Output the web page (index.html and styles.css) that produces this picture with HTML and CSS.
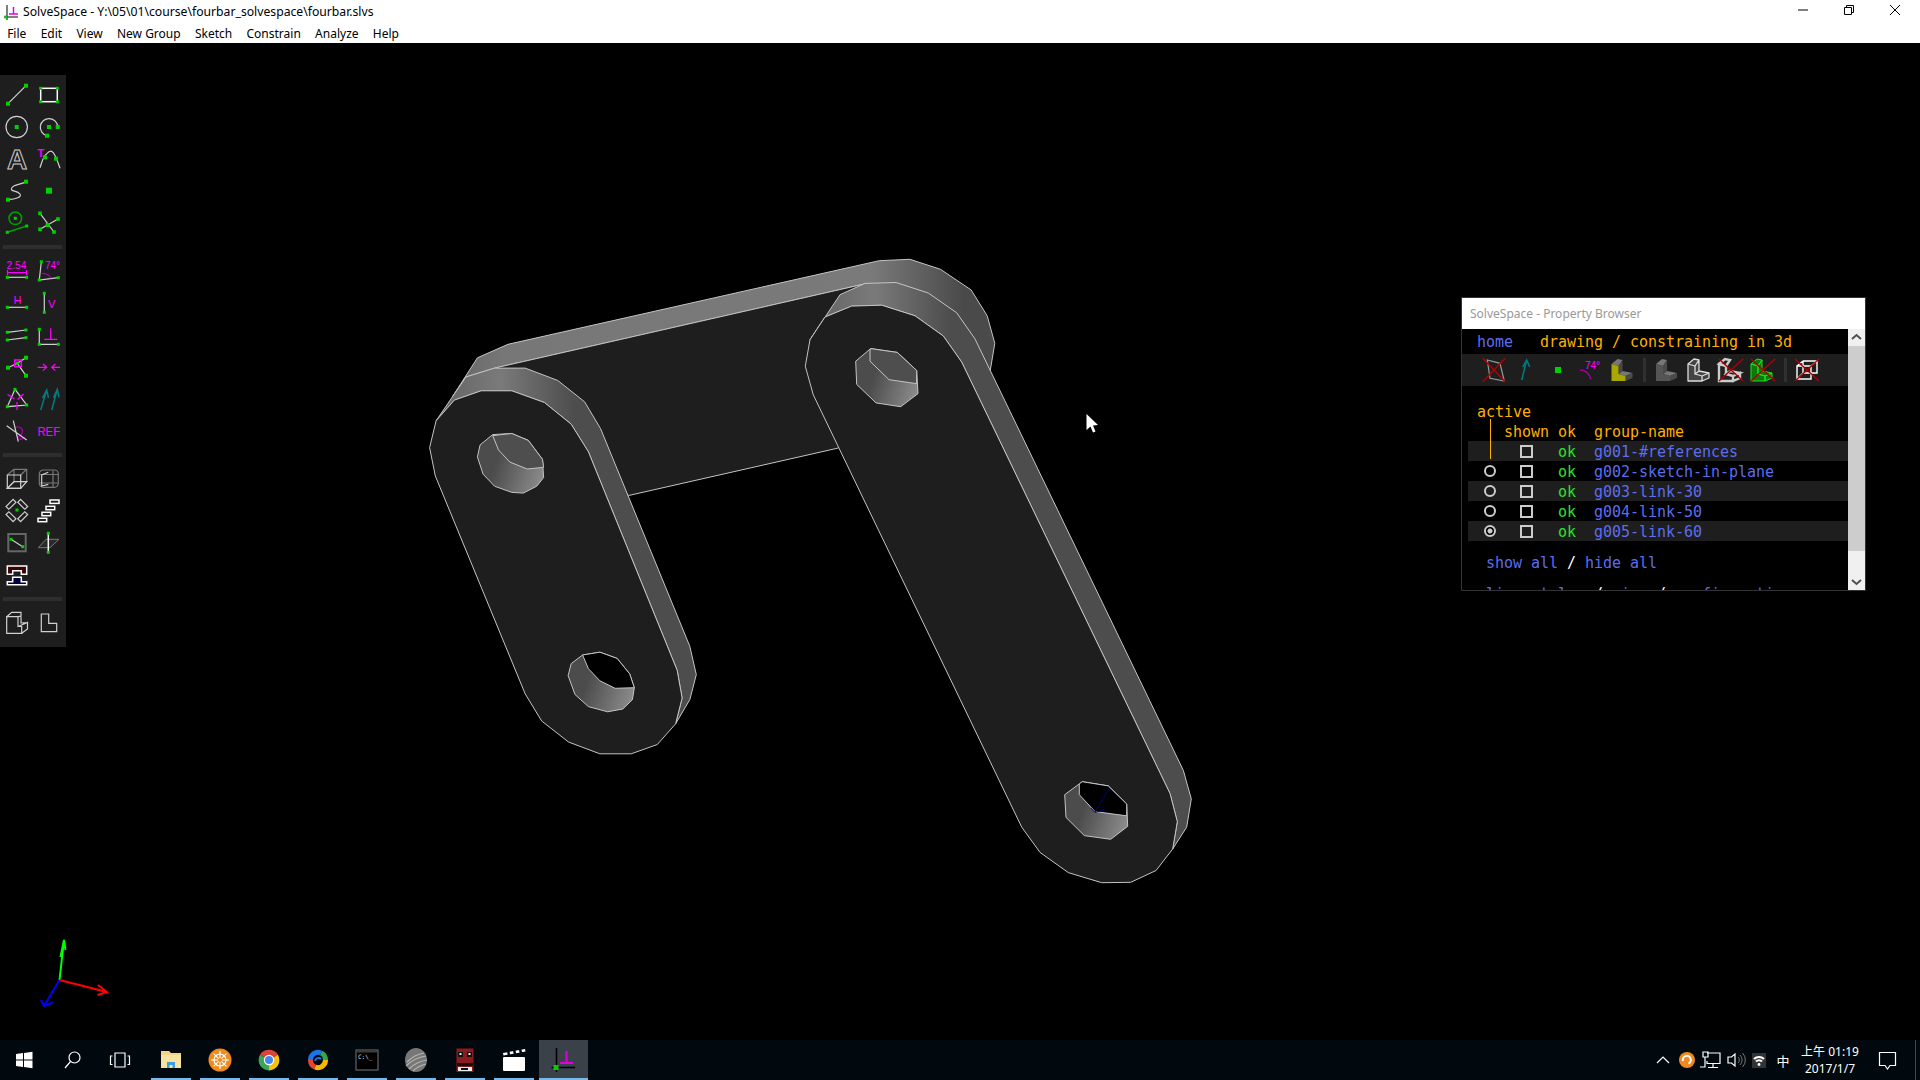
FILE: index.html
```html
<!DOCTYPE html>
<html lang="en">
<head>
    <meta charset="UTF-8">
    <title>SolveSpace</title>
    <link rel="stylesheet" href="styles.css">
</head>
<body>
    <div class="title-bar">
        <svg class="app-icon" viewBox="0 0 20 20">
            <path class="k" d="M3 15H17M6 3V18"/>
            <path class="m" d="M8 12H17M12.5 5V12"/>
            <rect class="g" x="3.5" y="13.5" width="3" height="3"/>
        </svg>
        <span class="title-text">SolveSpace - Y:\05\01\course\fourbar_solvespace\fourbar.slvs</span>
        <div class="win-btns">
            <svg class="win-btn" viewBox="0 0 46 20"><path class="k" d="M18 10H28"/></svg>
            <svg class="win-btn" viewBox="0 0 46 20"><path class="k" d="M18.5 7.5H25.5V14.5H18.5ZM20.5 7.5V5.5H27.5V12.5H25.5"/></svg>
            <svg class="win-btn" viewBox="0 0 46 20"><path class="k" d="M18 5L28 15M28 5L18 15"/></svg>
        </div>
    </div>
    <div class="menu-bar">
        <span class="menu-item">File</span>
        <span class="menu-item">Edit</span>
        <span class="menu-item">View</span>
        <span class="menu-item">New Group</span>
        <span class="menu-item">Sketch</span>
        <span class="menu-item">Constrain</span>
        <span class="menu-item">Analyze</span>
        <span class="menu-item">Help</span>
    </div>

    <div class="canvas">
        <svg class="model" viewBox="0 43 1920 997">
            <defs>
                <linearGradient id="rear" gradientUnits="userSpaceOnUse" x1="450" y1="0" x2="990" y2="0">
                    <stop offset="0" stop-color="#666"/>
                    <stop offset="0.1" stop-color="#777"/>
                    <stop offset="0.78" stop-color="#7a7a7a"/>
                    <stop offset="0.95" stop-color="#4a4a4a"/>
                </linearGradient>
                <linearGradient id="rim1" gradientUnits="userSpaceOnUse" x1="440" y1="0" x2="590" y2="0">
                    <stop offset="0" stop-color="#646464"/>
                    <stop offset="0.4" stop-color="#7a7a7a"/>
                    <stop offset="0.9" stop-color="#4d4d4d"/>
                </linearGradient>
                <linearGradient id="rim2" gradientUnits="userSpaceOnUse" x1="815" y1="0" x2="965" y2="0">
                    <stop offset="0" stop-color="#646464"/>
                    <stop offset="0.4" stop-color="#7a7a7a"/>
                    <stop offset="0.9" stop-color="#4d4d4d"/>
                </linearGradient>
                <linearGradient id="bore" x1="0" y1="0.35" x2="1" y2="0.65">
                    <stop offset="0.3" stop-color="#4c4c4c"/>
                    <stop offset="1" stop-color="#8a8a8a"/>
                </linearGradient>
            </defs>

            <!-- link-30, lies behind the other two -->
            <polygon class="edge" fill="url(#rear)" points="452.5,396.7 477.4,357.8 508,344.3 879.2,260.7 909.9,259.3 940.5,269.3 971.1,289.9 987.2,315.8 994.8,343.3 990.2,370.9 960,360 865.8,283.7 494.6,368.1 465.9,377"/>
            <polygon class="edge face" points="494.6,368.1 865.8,283.7 860,440 837.1,448.3 628.6,495.5 560,420"/>

            <!-- link-50 -->
            <polygon class="edge" fill="url(#rim1)" points="436.1,420.8 465.9,377 494.6,368.1 525.2,368.1 557.8,380.5 584.6,401.8 600.6,428.7 689.8,646.3 696.3,674.6 689.8,699.7 675.6,723.8 682.1,698 677.2,670.4 588.4,451.8 571.2,424.2 544.4,402.5 511.8,390.8 481.2,390.8 454.4,400.1"/>
            <polygon class="edge face" points="429.6,447.6 436.1,420.8 454.4,400.1 481.2,390.8 511.8,390.8 544.4,402.5 571.2,424.2 588.4,451.8 677.2,670.4 682.1,698 675.6,723.8 657.3,744.5 631.2,753.8 599.9,753.8 568.5,742 541.7,721 525.2,693.9 435.3,475.9"/>
            <polygon class="edge" fill="url(#bore)" points="477.4,456.9 480.1,444.9 492.7,434.6 511.8,433.5 528.3,440.4 542.5,459.4 543.6,477.6 536.7,486.2 523.3,493.1 511.8,492.4 494.6,486.2 483.1,474.2"/>
            <polygon class="edge bore-top" points="492.7,435.6 511.8,433.5 528.3,440.4 542.5,459.4 543.6,467.3 527.2,469 509.9,462.1 498.5,450"/>
            <polygon class="edge" fill="url(#bore)" points="568.1,675.6 571.2,663.6 582.6,655 599.9,652.2 617.1,658.4 629.7,673.9 634.3,687.7 632.4,699.7 622.8,709 607.5,711.8 588.4,706.6 575,694.5"/>
            <polygon class="edge see-through" points="582.6,655 599.9,652.2 617.1,658.4 629.7,673.9 634.3,687.7 615.2,688.3 599.9,680.8 588.4,668.7"/>

            <!-- link-60 -->
            <polygon class="edge" fill="url(#rim2)" points="810,339.7 840,294.7 865,283.4 896,282.5 928.3,293 956.7,312.8 975,338.9 1183.3,770.3 1191.3,798.9 1186.7,827.1 1172.7,849 1177.3,821.6 1170,793.5 961.7,362.1 943.3,336 915,315.8 881.7,305.2 851.7,306.1 825,317"/>
            <polygon class="edge face" points="805.3,366.3 810,339.7 825,317 851.7,306.1 881.7,305.2 915,315.8 943.3,336 961.7,362.1 1170,793.5 1177.3,821.6 1172.7,849 1156,870.5 1130.7,882.3 1101.7,882.7 1068.3,872.6 1040,852.4 1021.7,827.1 813.3,394.9"/>
            <polygon class="edge" fill="url(#bore)" points="855.7,361.2 870.7,348.6 897.3,352.4 916.7,370.5 918,393.6 900.7,406.7 876,402.9 856.7,384.4"/>
            <polygon class="edge bore-top" points="870,350 870.7,348.6 897.3,352.4 916.7,370.5 916.5,383.6 889,379.7 870,361.2"/>
            <polygon class="edge" fill="url(#bore)" points="1064.7,794.7 1082.3,781.7 1108.3,785.9 1126.7,804 1127.7,826.3 1110.7,839.3 1084.3,835.6 1066,817.4"/>
            <polygon class="edge see-through" points="1079.3,783.8 1082.3,781.7 1108.3,785.9 1126.7,804 1126.7,815.8 1095,811.6 1079.3,794.7"/>
            <path class="normal" d="M1109.3 788L1095 812M1090.7 808L1095 812.4L1105 810"/>

            <!-- axes -->
            <path class="axis axis-y" d="M59.5 980L64 940M60.5 957L64 940L65.5 950"/>
            <path class="axis axis-x" d="M59.5 980L107 992M98 985L107 992L97.5 995"/>
            <path class="axis axis-z" d="M59.5 980L44 1006M41 1000L44 1006L53 1002.5"/>

            <!-- mouse pointer -->
            <polygon class="pointer" points="1086.5,414 1086.5,430 1090.5,426.5 1093,432.5 1095.5,431.5 1093,425.5 1098,425"/>
        </svg>

        <div class="toolbar">
            <div class="tool-row">
                <svg class="ic" viewBox="0 0 32 32">
                    <path class="w" d="M8 24.7L26 6.7"/>
                    <rect class="g" x="6" y="22.7" width="4" height="4"/><rect class="g" x="24" y="4.7" width="4" height="4"/>
                </svg>
                <svg class="ic" viewBox="0 0 32 32">
                    <rect class="wb" x="8.7" y="9.3" width="16.6" height="13.4"/>
                    <rect class="g" x="7.2" y="7.8" width="3" height="3"/><rect class="g" x="23.8" y="7.8" width="3" height="3"/>
                    <rect class="g" x="7.2" y="21.2" width="3" height="3"/><rect class="g" x="23.8" y="21.2" width="3" height="3"/>
                </svg>
            </div>
            <div class="tool-row">
                <svg class="ic" viewBox="0 0 32 32">
                    <circle class="w" cx="16.7" cy="16" r="10.7"/>
                    <rect class="g" x="14.7" y="14" width="4" height="4"/>
                </svg>
                <svg class="ic" viewBox="0 0 32 32">
                    <path class="w" d="M25.7 16A8.7 8.7 0 1 0 15 24.7"/>
                    <rect class="g" x="15" y="14" width="4" height="4"/><rect class="g" x="23.7" y="14" width="4" height="4"/><rect class="g" x="13" y="22.7" width="4" height="4"/>
                </svg>
            </div>
            <div class="tool-row">
                <svg class="ic" viewBox="0 0 32 32">
                    <text class="ic-a" x="7" y="26.3">A</text>
                </svg>
                <svg class="ic" viewBox="0 0 32 32">
                    <text class="ic-text ic-bold" x="5.5" y="13.5">T</text>
                    <path class="w" d="M8 24.7C10 19 11.5 12.5 14 11.5C16 9 18 7.5 20 8.5C23 10 25.5 18 28 25.3"/>
                    <rect class="g" x="11" y="12.3" width="4" height="4"/><rect class="g" x="22" y="13.7" width="4" height="4"/>
                </svg>
            </div>
            <div class="tool-row">
                <svg class="ic" viewBox="0 0 32 32">
                    <path class="w" d="M8 24.7C16 24 22 22 20 19C17 15 9 17 12 12.5C14.5 9 20 10 26 6.7"/>
                    <rect class="g" x="6" y="22.7" width="4" height="4"/><rect class="g" x="24" y="4.7" width="4" height="4"/>
                </svg>
                <svg class="ic" viewBox="0 0 32 32"><rect class="g" x="14" y="12.7" width="6" height="6"/></svg>
            </div>
            <div class="tool-row">
                <svg class="ic" viewBox="0 0 32 32">
                    <circle class="dg" cx="15.3" cy="11.3" r="6.3"/>
                    <path class="dg" d="M7.3 25.3L26.7 19"/>
                    <rect class="g" x="13.8" y="9.8" width="3" height="3"/><rect class="g" x="5.8" y="23.8" width="3" height="3"/><rect class="g" x="25.2" y="17.5" width="3" height="3"/>
                </svg>
                <svg class="ic" viewBox="0 0 32 32">
                    <path class="w" d="M8 6.3L22 25M26 12L8 22.3"/>
                    <rect class="g" x="6.2" y="4.5" width="3.6" height="3.6"/><rect class="g" x="24.2" y="10.2" width="3.6" height="3.6"/><rect class="g" x="6.2" y="20.5" width="3.6" height="3.6"/><rect class="g" x="20.2" y="23.2" width="3.6" height="3.6"/><rect class="g" x="13.7" y="16" width="4" height="4"/>
                </svg>
            </div>
            <div class="tool-sep"></div>
            <div class="tool-row">
                <svg class="ic" viewBox="0 0 32 32">
                    <text class="ic-text" x="6.5" y="13.5" textLength="20" lengthAdjust="spacingAndGlyphs">2.54</text>
                    <path class="mg" d="M7.5 17.7H26.5M7.5 15V20.3M26.5 15V20.3"/>
                    <path class="w" d="M7.3 22.3H26.7"/>
                    <rect class="g" x="5.8" y="20.8" width="3" height="3"/><rect class="g" x="25.2" y="20.8" width="3" height="3"/>
                </svg>
                <svg class="ic" viewBox="0 0 32 32">
                    <text class="ic-text" x="13" y="13.5" textLength="15" lengthAdjust="spacingAndGlyphs">74°</text>
                    <path class="w" d="M9.3 6.7L7.3 25L26.3 22.7"/>
                    <path class="dm" d="M9.7 18.3C14 18.3 17.5 20 18.7 23.3"/>
                    <rect class="g" x="7.8" y="5.2" width="3" height="3"/><rect class="g" x="5.8" y="23.5" width="3" height="3"/><rect class="g" x="24.8" y="21.2" width="3" height="3"/>
                </svg>
            </div>
            <div class="tool-row">
                <svg class="ic" viewBox="0 0 32 32">
                    <text class="ic-text" x="13.5" y="16.8">H</text>
                    <path class="w" d="M7.3 20.3H26.7"/>
                    <rect class="g" x="5.8" y="18.8" width="3" height="3"/><rect class="g" x="25.2" y="18.8" width="3" height="3"/>
                </svg>
                <svg class="ic" viewBox="0 0 32 32">
                    <text class="ic-text" x="16" y="20.8">V</text>
                    <path class="w" d="M12.3 6.3V25.3"/>
                    <rect class="g" x="10.8" y="4.8" width="3" height="3"/><rect class="g" x="10.8" y="23.8" width="3" height="3"/>
                </svg>
            </div>
            <div class="tool-row">
                <svg class="ic" viewBox="0 0 32 32">
                    <path class="w" d="M7.3 13.3L26 11M7.3 21L26 18.7"/>
                    <rect class="g" x="5.8" y="11.8" width="3" height="3"/><rect class="g" x="24.5" y="9.5" width="3" height="3"/><rect class="g" x="5.8" y="19.5" width="3" height="3"/><rect class="g" x="24.5" y="17.2" width="3" height="3"/>
                </svg>
                <svg class="ic" viewBox="0 0 32 32">
                    <path class="w" d="M7.3 10.3V25.3H26.3"/>
                    <path class="mg" d="M12.3 20.3H25.3M18.7 9.3V20.3"/>
                    <rect class="g" x="5.8" y="8.8" width="3" height="3"/><rect class="g" x="5.8" y="23.8" width="3" height="3"/><rect class="g" x="24.8" y="23.8" width="3" height="3"/>
                </svg>
            </div>
            <div class="tool-row">
                <svg class="ic" viewBox="0 0 32 32">
                    <path class="w" d="M8 16.7L17.3 12.3L26 6.7M17.3 12.3L26 24.7"/>
                    <rect class="mgb" x="14.7" y="9" width="6.6" height="6.6"/>
                    <rect class="g" x="6" y="14.7" width="4" height="4"/><rect class="g" x="24" y="4.7" width="4" height="4"/><rect class="g" x="24" y="22.7" width="4" height="4"/><rect class="g" x="15.8" y="10.8" width="3" height="3"/>
                </svg>
                <svg class="ic" viewBox="0 0 32 32">
                    <path class="mg" d="M5.7 16.3H14.7M11 13L14.7 16.3L11 19.6M28 16.3H19.7M23.4 13L19.7 16.3L23.4 19.6"/>
                </svg>
            </div>
            <div class="tool-row">
                <svg class="ic" viewBox="0 0 32 32">
                    <path class="w" d="M15 6.3L7.3 23.7L26.7 22Z"/>
                    <path class="mg" d="M7.5 11.5L14.5 16M23.5 11L17.5 16.5M17 19V27"/>
                    <rect class="g" x="13.5" y="4.8" width="3" height="3"/><rect class="g" x="5.8" y="22.2" width="3" height="3"/><rect class="g" x="25.2" y="20.5" width="3" height="3"/>
                </svg>
                <svg class="ic" viewBox="0 0 32 32">
                    <path class="teal" d="M8.7 27L14.7 7M10.5 15L14.7 7L16.5 15M19.7 27L25.3 6.3M21.5 14.5L25.3 6.3L27 14.5"/>
                </svg>
            </div>
            <div class="tool-row">
                <svg class="ic" viewBox="0 0 32 32">
                    <path class="dm" d="M14 13C19 10 24 14 22 18C21 21 19 22 17 22.5M17 24.5C20 24 23 24.5 25 22"/>
                    <path class="w" d="M6.7 10.7L26.7 25M13.3 5.7L18.3 26.7"/>
                </svg>
                <svg class="ic" viewBox="0 0 32 32"><text class="ic-ref" x="5.5" y="21" textLength="22.5" lengthAdjust="spacingAndGlyphs">REF</text></svg>
            </div>
            <div class="tool-sep"></div>
            <div class="tool-row">
                <svg class="ic" viewBox="0 0 32 32">
                    <path class="dim" d="M14 12V6.3H26.7V18.7H20.7M7.3 12L14 6.3M20.7 12L26.7 6.3M14 6.3V18.7L7.3 25.3"/>
                    <path class="w" d="M7.3 12H20.7V25.3H7.3Z"/>
                    <path class="w" d="M14 18.7H26.7L20.7 25.3H7.3Z"/>
                </svg>
                <svg class="ic" viewBox="0 0 32 32">
                    <rect class="dim" x="7.3" y="7" width="19" height="17.3" rx="4"/>
                    <path class="dim" d="M8 11.5H26M8 20H26M21 7.5V24"/>
                    <path class="w" d="M16.3 9.3L9.7 12V23L16.3 21.3"/>
                </svg>
            </div>
            <div class="tool-row">
                <svg class="ic" viewBox="0 0 32 32">
                    <rect class="w" x="6" y="7.3" width="10" height="4" transform="rotate(-45 11 9.3)"/>
                    <rect class="w" x="17.7" y="7.3" width="10" height="4" transform="rotate(45 22.7 9.3)"/>
                    <rect class="w" x="6" y="19.7" width="10" height="4" transform="rotate(45 11 21.7)"/>
                    <rect class="w" x="17.7" y="19.7" width="10" height="4" transform="rotate(-45 22.7 21.7)"/>
                    <rect class="g" x="15.5" y="13.5" width="3" height="3"/>
                </svg>
                <svg class="ic" viewBox="0 0 32 32">
                    <rect class="wb" x="18" y="5" width="9" height="3.4"/>
                    <rect class="wb" x="14" y="11.3" width="8.7" height="3.4"/>
                    <rect class="wb" x="10" y="17.3" width="8.7" height="3.4"/>
                    <rect class="wb" x="6" y="23.3" width="8.7" height="3.4"/>
                </svg>
            </div>
            <div class="tool-row">
                <svg class="ic" viewBox="0 0 32 32">
                    <rect class="dim2" x="8.3" y="7" width="17.4" height="17.3"/>
                    <path class="w" d="M11 12.3L22.7 19.7"/>
                    <rect class="g" x="9.5" y="10.8" width="3" height="3"/><rect class="g" x="21.2" y="18.2" width="3" height="3"/>
                </svg>
                <svg class="ic" viewBox="0 0 32 32">
                    <path class="dim-fill" d="M6.3 20.7L14 12.3H27L18 20.7Z"/>
                    <path class="wb" d="M16.3 6.3V25.3"/>
                    <rect class="g" x="14.8" y="4.8" width="3" height="3"/><rect class="g" x="14.8" y="23.8" width="3" height="3"/>
                </svg>
            </div>
            <div class="tool-row">
                <svg class="ic" viewBox="0 0 32 32">
                    <path class="maroon" d="M7.3 7H26.7V15.3H21.3V11.7H12.7V15.3H7.3Z"/>
                    <path class="navy" d="M12.7 18.3H21.3V22.7H26.7V25.7H7.3V22.7H12.7Z"/>
                </svg>
                <svg class="ic" viewBox="0 0 32 32"></svg>
            </div>
            <div class="tool-sep"></div>
            <div class="tool-row">
                <svg class="ic" viewBox="0 0 32 32">
                    <path class="w" d="M6.7 9.7H18V19.5H21.7V26.3H6.7Z"/>
                    <path class="w" d="M6.7 9.7L11.7 5.3H21V9L18 9.7M21 5.3V16H21.7M18 19.5L27.5 15.5V22L21.7 26.3M21 16L27.5 15.5"/>
                </svg>
                <svg class="ic" viewBox="0 0 32 32">
                    <path class="w" d="M9.3 7H16.7V16.3H24.7V24.7H9.3Z"/>
                </svg>
            </div>
        </div>

        <div class="browser">
            <div class="browser-title">SolveSpace - Property Browser</div>
            <div class="browser-body">
                <div class="browser-text">
                    <div class="line line-home"><span class="link">home</span>   <span class="head">drawing / constraining in 3d</span></div>
                    <div class="icon-strip">
                        <svg class="bi" viewBox="0 0 32 32">
                            <path class="dimw" d="M9.3 6L22 9.3L26.3 27L12 24.3Z"/>
                            <path class="red" d="M4.7 4.3L27.3 27.7M27.3 4.3L4.7 27.7"/>
                        </svg>
                        <svg class="bi" viewBox="0 0 32 32"><path class="teal" d="M11.7 26L16.7 6M12.7 13L16.7 6L19.7 13"/></svg>
                        <svg class="bi" viewBox="0 0 32 32"><rect class="g2" x="13" y="13" width="6" height="6"/></svg>
                        <svg class="bi" viewBox="0 0 32 32">
                            <text class="ic-text" x="11" y="14.5" textLength="15" lengthAdjust="spacingAndGlyphs">74°</text>
                            <path class="dm" d="M6 16C11 16 15 19 16.7 25"/>
                        </svg>
                        <svg class="bi" viewBox="-1.5 0 32 32">
                            <path class="s-top" d="M4 10L10 5L15 6L11 12ZM11 20L15 17L25 19L18 22Z"/>
                            <path class="s-side" d="M11 12L15 6V17L11 20ZM18 22L25 19V24L18 27Z"/>
                            <path class="s-yellow" d="M4 10L11 12V20L18 22V27H4Z"/>
                        </svg>
                        <span class="strip-sep"></span>
                        <svg class="bi" viewBox="-1 0 32 32">
                            <path class="s-top" d="M4 10L10 5L15 6L11 12ZM11 20L15 17L25 19L18 22Z"/>
                            <path class="s-side" d="M11 12L15 6V17L11 20ZM18 22L25 19V24L18 27Z"/>
                            <path class="s-front" d="M4 10L11 12V20L18 22V27H4Z"/>
                        </svg>
                        <svg class="bi" viewBox="-1 0 32 32">
                            <path class="s-wire" d="M4 10L10 5L15 6L11 12ZM11 20L15 17L25 19L18 22ZM11 12L15 6V17L11 20ZM18 22L25 19V24L18 27ZM4 10L11 12V20L18 22V27H4Z"/>
                        </svg>
                        <svg class="bi" viewBox="0 0 32 32">
                            <path class="s-thick" d="M4 10L10 5L15 6L11 12ZM11 20L15 17L25 19L18 22ZM18 22L25 19V24L18 27ZM4 10L11 12V20L18 22V27H4Z"/>
                            <path class="red" d="M4 5L28 27M28 5L4 27"/>
                        </svg>
                        <svg class="bi" viewBox="0 0 32 32">
                            <path class="s-green" d="M4 10L10 5L15 6L11 12ZM11 20L15 17L25 19L18 22ZM11 12L15 6V17L11 20ZM18 22L25 19V24L18 27ZM4 10L11 12V20L18 22V27H4Z"/>
                            <path class="red" d="M4 5L28 27M28 5L4 27"/>
                        </svg>
                        <span class="strip-sep"></span>
                        <svg class="bi" viewBox="1 0 32 32">
                            <path class="w-bright" d="M6 12H20V25H6ZM12 7H26V19H20M6 12L12 7M20 12L26 7M12 7V19H20M6 25L12 19"/>
                            <path class="red" d="M4 5L28 27M28 5L4 27"/>
                        </svg>
                    </div>
                    <div class="line line-active head">active</div>
                    <div class="group-row">
                        <span class="col-shown head">shown</span><span class="col-ok head">ok</span><span class="head">group-name</span>
                    </div>
                    <div class="group-list">
                        <div class="active-rule"></div>
                        <div class="group-row striped">
                            <span class="col-active"></span><span class="col-check"><i class="check"></i></span><span class="col-ok ok">ok</span><span class="link">g001-#references</span>
                        </div>
                        <div class="group-row">
                            <span class="col-active"><i class="radio"></i></span><span class="col-check"><i class="check"></i></span><span class="col-ok ok">ok</span><span class="link">g002-sketch-in-plane</span>
                        </div>
                        <div class="group-row striped">
                            <span class="col-active"><i class="radio"></i></span><span class="col-check"><i class="check"></i></span><span class="col-ok ok">ok</span><span class="link">g003-link-30</span>
                        </div>
                        <div class="group-row">
                            <span class="col-active"><i class="radio"></i></span><span class="col-check"><i class="check"></i></span><span class="col-ok ok">ok</span><span class="link">g004-link-50</span>
                        </div>
                        <div class="group-row striped">
                            <span class="col-active"><i class="radio radio-on"></i></span><span class="col-check"><i class="check"></i></span><span class="col-ok ok">ok</span><span class="link">g005-link-60</span>
                        </div>
                    </div>
                    <div class="line line-show"><span class="link">show all</span> / <span class="link">hide all</span></div>
                    <div class="line line-more"><span class="link">line styles</span> / <span class="link">view</span> / <span class="link">configuration</span></div>
                </div>
                <div class="scrollbar">
                    <svg class="scroll-arrow" viewBox="0 0 17 17"><path d="M4 10L8.5 6L13 10"/></svg>
                    <div class="scroll-track"><div class="scroll-thumb"></div></div>
                    <svg class="scroll-arrow" viewBox="0 0 17 17"><path d="M4 7L8.5 11L13 7"/></svg>
                </div>
            </div>
        </div>
    </div>

    <div class="taskbar">
        <div class="tb-btn">
            <svg class="tb-icon" viewBox="0 0 24 24"><path class="tw" d="M4 6L11 5V11.5H4ZM12 4.9L20.5 3.7V11.5H12ZM4 12.5H11V19L4 18ZM12 12.5H20.5V20.3L12 19.1Z"/></svg>
        </div>
        <div class="tb-btn">
            <svg class="tb-icon" viewBox="0 0 24 24"><circle class="tl" cx="14.5" cy="9.5" r="5.5"/><path class="tl" d="M10.5 13.5L5 20"/></svg>
        </div>
        <div class="tb-btn">
            <svg class="tb-icon" viewBox="0 0 24 24"><path class="tl" d="M7 5H17V19H7ZM4.5 8H2.5V16.5H4.5M19.5 8H21.5V16.5H19.5"/></svg>
        </div>
        <div class="tb-apps">
            <div class="tb-app">
                <svg class="tb-icon" viewBox="0 0 24 24">
                    <path class="f-tab" d="M2 3H10L12 5H22V20H2Z"/>
                    <rect class="f-body" x="2" y="7" width="20" height="13"/>
                    <path class="f-blue" d="M8 20V14H16V20H13.5V17H10.5V20Z"/>
                </svg>
            </div>
            <div class="tb-app">
                <svg class="tb-icon" viewBox="0 0 24 24">
                    <circle class="o-disc" cx="12" cy="12" r="11.5"/>
                    <circle class="tw-line" cx="12" cy="12" r="6"/>
                    <path class="tw-line" d="M12 3V21M3 12H21M5.6 5.6L18.4 18.4M18.4 5.6L5.6 18.4"/>
                    <circle class="o-disc" cx="12" cy="12" r="2"/>
                </svg>
            </div>
            <div class="tb-app">
                <svg class="tb-icon" viewBox="0 0 24 24">
                    <path class="c-red" d="M12 12L3 6.8A10.5 10.5 0 0 1 21 6.8Z"/>
                    <path class="c-yellow" d="M12 12L21 6.8A10.5 10.5 0 0 1 12 22.5Z"/>
                    <path class="c-green" d="M12 12L12 22.5A10.5 10.5 0 0 1 3 6.8Z"/>
                    <circle class="c-white" cx="12" cy="12" r="5.2"/>
                    <circle class="c-blue" cx="12" cy="12" r="4"/>
                </svg>
            </div>
            <div class="tb-app">
                <svg class="tb-icon" viewBox="0 0 24 24">
                    <path class="r-blue" d="M4.5 12A7.5 7.5 0 0 1 15 5"/>
                    <path class="r-green" d="M15 5A7.5 7.5 0 0 1 19.5 12"/>
                    <path class="r-yellow" d="M19.5 12A7.5 7.5 0 0 1 9 19"/>
                    <path class="r-red" d="M9 19A7.5 7.5 0 0 1 4.5 12"/>
                    <path class="r-inner" d="M9 13A3.5 3.5 0 0 1 15 11"/>
                </svg>
            </div>
            <div class="tb-app">
                <svg class="tb-icon" viewBox="0 0 24 24">
                    <rect class="cmd" x="1" y="2" width="22" height="20"/>
                    <rect class="cmd-bar" x="1.5" y="2.5" width="21" height="2"/>
                    <text class="cmd-text" x="3" y="10.5">C:\_</text>
                </svg>
            </div>
            <div class="tb-app">
                <svg class="tb-icon" viewBox="0 0 24 24">
                    <ellipse class="sphere" cx="12" cy="12" rx="11" ry="12"/>
                    <path class="sphere-line" d="M3 14C8 9 14 6 20 5M2 18C8 12 15 9 22 8M5 21C10 16 16 13 23 12M9 23C13 19 18 17 22 16"/>
                </svg>
            </div>
            <div class="tb-app">
                <svg class="tb-icon" viewBox="0 0 24 24">
                    <rect class="z-red" x="3.5" y="0.5" width="17" height="24"/>
                    <rect class="z-black" x="5" y="4" width="5" height="5"/><rect class="z-black" x="14" y="4" width="5" height="5"/>
                    <rect class="z-white" x="6.5" y="5" width="2" height="2"/><rect class="z-white" x="15.5" y="5" width="2" height="2"/>
                    <rect class="z-black" x="4" y="15" width="16" height="3"/>
                    <rect class="z-white" x="5" y="19" width="14" height="4"/><rect class="z-black" x="8" y="20" width="7" height="2"/>
                </svg>
            </div>
            <div class="tb-app">
                <svg class="tb-icon" viewBox="0 0 24 24">
                    <path class="tw" d="M1 5L23 1L23.5 3.5L1.5 7.5Z"/>
                    <path class="clap" d="M6 2.5L7 7M12 1.5L13 6M18 1L19 5"/>
                    <rect class="tw" x="1" y="9" width="22" height="14" rx="1"/>
                </svg>
            </div>
            <div class="tb-app tb-app-active">
                <svg class="tb-icon" viewBox="0 0 24 24">
                    <path class="tk" d="M0.5 19.5H24M5.5 0V24"/>
                    <path class="tm" d="M9 15H22M15.5 3V15"/>
                    <rect class="g" x="2.5" y="17" width="5" height="5"/>
                </svg>
            </div>
        </div>
        <div class="tray">
            <svg class="tray-ic" viewBox="0 0 24 24"><path class="tw-line" d="M6 15L12 9L18 15"/></svg>
            <svg class="tray-ic" viewBox="0 0 24 24"><circle class="o-disc" cx="12" cy="12" r="8"/><path class="tw-thick" d="M8 13A4 4 0 1 1 13.5 15.5"/></svg>
            <svg class="tray-ic" viewBox="0 0 24 24"><path class="tw-line" d="M8 5H21V15.5H8V13M14 15.5V19M9 19.5H19M4 4H9V9H4ZM6 9V19H1"/></svg>
            <svg class="tray-ic" viewBox="0 0 24 24"><path class="tw-line" d="M5 9H8.5L12 6V18L8.5 15H5Z"/><path class="tw-faint" d="M15 9A4 4 0 0 1 15 15M17 7A7 7 0 0 1 17 17M19.5 5A10 10 0 0 1 19.5 19"/></svg>
            <svg class="tray-ic" viewBox="0 0 24 24"><rect class="wifi-box" x="5" y="5" width="14" height="15"/><path class="tw-thick" d="M7 11A7 7 0 0 1 17 11M9 13.5A4 4 0 0 1 15 13.5"/><circle class="wifi-dot" cx="12" cy="16.5" r="1.4"/></svg>
            <span class="tray-ime">中</span>
            <div class="clock"><span>上午 01:19</span><span>2017/1/7</span></div>
            <svg class="notify" viewBox="0 0 44 40"><path class="tw-line" d="M14.5 12.5H30.5V25.5H25L22.5 29L20 25.5H14.5Z"/></svg>
            <div class="show-desktop"></div>
        </div>
    </div>
</body>
</html>
```

FILE: styles.css
```css
/* Page */
body {
    margin: 0;
    height: 100vh;
    display: flex;
    flex-direction: column;
    overflow: hidden;
    background-color: #000;
    font-family: "Noto Sans", sans-serif;
    font-size: 12px;
    color: #000;
}

/* Title bar and menu */
.title-bar {
    height: 23px;
    flex: none;
    display: flex;
    align-items: center;
    background-color: #fff;
}

.app-icon {
    width: 20px;
    height: 20px;
    margin-left: 1px;
}

.title-text {
    margin-left: 2px;
    font-size: 12.2px;
}

.win-btns {
    margin-left: auto;
    margin-right: 2px;
    display: flex;
}

.win-btn {
    width: 46px;
    height: 20px;
    margin-bottom: 3px;
}

.menu-bar {
    height: 20px;
    flex: none;
    display: flex;
    align-items: center;
    background-color: #fff;
}

.menu-item {
    padding: 0 7.15px;
    font-size: 12px;
}

/* Drawing area */
.canvas {
    flex: 1;
    position: relative;
    background-color: #000;
}

.model {
    position: absolute;
    top: 0;
    left: 0;
    width: 1920px;
    height: 997px;
}

.edge {
    stroke: #c4c4c4;
    stroke-width: 1;
    stroke-linejoin: round;
}

.face {
    fill: #1e1e1e;
}

.bore-top {
    fill: #4e4e4e;
}

.see-through {
    fill: #000;
}

.normal {
    fill: none;
    stroke: #000080;
    stroke-width: 1;
}

.axis {
    fill: none;
    stroke-width: 2;
}

.axis-x {
    stroke: #f00;
}

.axis-y {
    stroke: #0f0;
}

.axis-z {
    stroke: #00f;
}

.pointer {
    fill: #fff;
}

/* Left toolbar */
.toolbar {
    position: absolute;
    top: 32px;
    left: 0;
    width: 66px;
    box-sizing: border-box;
    padding: 4px 1px 8px 0;
    background-color: #1e1e1e;
}

.tool-row {
    display: flex;
    height: 32px;
}

.tool-sep {
    height: 4px;
    margin: 6px 3px;
    background-color: #2e2e2e;
}

.ic {
    width: 32px;
    height: 32px;
}

.ic-text {
    font-family: "Liberation Sans", sans-serif;
    font-size: 11px;
    fill: #f0f;
}

.ic-bold {
    font-weight: bold;
}

.ic-ref {
    font-family: "Liberation Sans", sans-serif;
    font-size: 13px;
    fill: #f0f;
}

.ic-a {
    font-family: "Liberation Sans", sans-serif;
    font-size: 28px;
    font-weight: bold;
    fill: none;
    stroke: #ccc;
    stroke-width: 1;
}

/* Icon strokes, shared by the toolbar and the browser */
.w {
    fill: none;
    stroke: #d0d0d0;
    stroke-width: 1.2;
}

.w-bright {
    fill: none;
    stroke: #fff;
    stroke-width: 1.4;
}

.wb {
    fill: none;
    stroke: #fff;
    stroke-width: 1.5;
}

.g {
    fill: #00d000;
}

.g2 {
    fill: #00d000;
}

.dg {
    fill: none;
    stroke: #00a000;
    stroke-width: 1.5;
}

.mg {
    fill: none;
    stroke: #f0f;
    stroke-width: 1.2;
}

.mgb {
    fill: none;
    stroke: #f0f;
    stroke-width: 1.5;
}

.dm {
    fill: none;
    stroke: #a000a0;
    stroke-width: 1.3;
}

.teal {
    fill: none;
    stroke: #007c80;
    stroke-width: 1.5;
}

.dim {
    fill: none;
    stroke: #777;
    stroke-width: 1.2;
}

.dim2 {
    fill: none;
    stroke: #666;
    stroke-width: 2;
}

.dim-fill {
    fill: #2a2a2a;
    stroke: #777;
    stroke-width: 1;
}

.dimw {
    fill: none;
    stroke: #999;
    stroke-width: 1.2;
}

.maroon {
    fill: #400000;
    stroke: #fff;
    stroke-width: 1.5;
}

.navy {
    fill: #000040;
    stroke: #fff;
    stroke-width: 1.5;
}

.red {
    fill: none;
    stroke: #b00000;
    stroke-width: 1.5;
}

.k {
    fill: none;
    stroke: #000;
    stroke-width: 1;
}

.m {
    fill: none;
    stroke: #e000e0;
    stroke-width: 1.5;
}

/* Property browser */
.browser {
    position: absolute;
    top: 255px;
    left: 1462px;
    width: 403px;
    height: 292px;
    display: flex;
    flex-direction: column;
    box-shadow: 0 0 0 1px #333;
}

.browser-title {
    height: 31px;
    flex: none;
    padding-left: 8px;
    line-height: 32px;
    font-size: 12px;
    color: #999;
    background-color: #fff;
}

.browser-body {
    flex: 1;
    display: flex;
    min-height: 0;
}

.browser-text {
    flex: 1;
    overflow: hidden;
    background-color: #000;
    font-family: "DejaVu Sans Mono", monospace;
    font-size: 15px;
    letter-spacing: -0.03px;
}

.line {
    height: 20px;
    line-height: 20px;
    padding-left: 15px;
    white-space: pre;
}

.line-home {
    margin-top: 3px;
}

.line-active {
    margin-top: 15px;
    line-height: 22px;
}

.line-show {
    margin-top: 11px;
    padding-left: 24px;
    line-height: 22px;
    color: #fff;
}

.line-more {
    margin-top: 12px;
    padding-left: 24px;
    color: #fff;
}

.link {
    color: #5d6df0;
}

.head {
    color: #ffb000;
}

.ok {
    color: #30e030;
}

.icon-strip {
    height: 32px;
    margin-top: 2px;
    display: flex;
    align-items: center;
    padding-left: 16px;
    background-color: #1e1e1e;
}

.bi {
    width: 32px;
    height: 32px;
    flex: none;
}

.strip-sep {
    width: 3px;
    height: 24px;
    margin: 0 5px 0 5px;
    background-color: #303030;
}

.s-top {
    fill: #777;
}

.s-side {
    fill: #4a4a4a;
}

.s-front {
    fill: #555;
}

.s-yellow {
    fill: #a8a800;
}

.s-wire {
    fill: #444;
    stroke: #ddd;
    stroke-width: 1.3;
    stroke-linejoin: round;
}

.s-thick {
    fill: #222;
    stroke: #ccc;
    stroke-width: 2.4;
}

.s-green {
    fill: #0a7a0a;
    stroke: #20e020;
    stroke-width: 1;
}

.group-list {
    position: relative;
}

.group-row {
    display: flex;
    height: 20px;
    line-height: 22px;
    margin-left: 6px;
}

.striped {
    background-color: #1e1e1e;
}

.col-shown {
    width: 90px;
    padding-left: 36px;
    box-sizing: border-box;
}

.col-active {
    width: 52px;
    display: flex;
    align-items: center;
    padding-left: 16px;
    box-sizing: border-box;
}

.col-check {
    width: 38px;
    display: flex;
    align-items: center;
}

.col-ok {
    width: 36px;
}

.active-rule {
    position: absolute;
    top: -22px;
    left: 28px;
    width: 1px;
    height: 40px;
    background-color: #ffb000;
}

.radio {
    width: 8px;
    height: 8px;
    border: 2px solid #ccc;
    border-radius: 50%;
}

.radio-on {
    background: radial-gradient(circle, #ccc 0 2px, #000 3px);
}

.check {
    width: 9px;
    height: 9px;
    border: 2px solid #ccc;
}

.scrollbar {
    width: 17px;
    flex: none;
    display: flex;
    flex-direction: column;
    background-color: #f0f0f0;
}

.scroll-arrow {
    width: 17px;
    height: 17px;
    flex: none;
    fill: none;
    stroke: #505050;
    stroke-width: 2;
}

.scroll-track {
    flex: 1;
}

.scroll-thumb {
    height: 205px;
    background-color: #cdcdcd;
}

/* Taskbar */
.taskbar {
    height: 40px;
    flex: none;
    display: flex;
    background-color: #01090f;
}

.tb-btn {
    width: 48px;
    display: flex;
    align-items: center;
    justify-content: center;
}

.tb-apps {
    margin-left: 2.5px;
    display: flex;
}

.tb-app {
    position: relative;
    width: 49px;
    display: flex;
    align-items: center;
    justify-content: center;
}

.tb-app::after {
    content: "";
    position: absolute;
    left: 4.5px;
    right: 4.5px;
    bottom: 0;
    height: 2px;
    background-color: #76b9ed;
}

.tb-app-active {
    background-color: #3a4148;
}

.tb-app-active::after {
    left: 0;
    right: 0;
}

.tb-icon {
    width: 24px;
    height: 24px;
}

.tw {
    fill: #fff;
}

.tl {
    fill: none;
    stroke: #fff;
    stroke-width: 1.2;
}

.tw-line {
    fill: none;
    stroke: #fff;
    stroke-width: 1.2;
}

.tw-thick {
    fill: none;
    stroke: #fff;
    stroke-width: 2;
}

.tw-faint {
    fill: none;
    stroke: #777;
    stroke-width: 1;
}

.f-tab {
    fill: #f3d58a;
}

.f-body {
    fill: #f8e3a0;
}

.f-blue {
    fill: #3a9ee4;
}

.o-disc {
    fill: #ee8a1e;
}

.c-red {
    fill: #db4437;
}

.c-yellow {
    fill: #f4c20d;
}

.c-green {
    fill: #3aa757;
}

.c-white {
    fill: #fff;
}

.c-blue {
    fill: #4285f4;
}

.r-blue,
.r-green,
.r-yellow,
.r-red,
.r-inner {
    fill: none;
    stroke-width: 5;
}

.r-blue {
    stroke: #1a73e8;
}

.r-green {
    stroke: #2fa84f;
}

.r-yellow {
    stroke: #f5b800;
}

.r-red {
    stroke: #e8432e;
}

.r-inner {
    stroke: #1a73e8;
    stroke-width: 2;
}

.cmd {
    fill: #000;
    stroke: #777;
}

.cmd-bar {
    fill: #3c3c3c;
}

.cmd-text {
    font-family: "DejaVu Sans Mono", monospace;
    font-size: 6px;
    fill: #ddd;
}

.sphere {
    fill: #777;
}

.sphere-line {
    fill: none;
    stroke: #b5b5b5;
    stroke-width: 1.2;
}

.z-red {
    fill: #8c1c1c;
}

.z-black {
    fill: #111;
}

.z-white {
    fill: #eee;
}

.clap {
    fill: none;
    stroke: #01090f;
    stroke-width: 2.5;
}

.tk {
    fill: none;
    stroke: #000;
    stroke-width: 1.5;
}

.tm {
    fill: none;
    stroke: #e000e0;
    stroke-width: 2;
}

/* System tray */
.tray {
    margin-left: auto;
    display: flex;
    align-items: center;
    color: #fff;
}

.tray-ic {
    width: 24px;
    height: 24px;
}

.tray-ime {
    width: 24px;
    text-align: center;
    font-family: "Noto Sans CJK TC", sans-serif;
    font-size: 13px;
}

.wifi-box {
    fill: #333;
}

.wifi-dot {
    fill: #fff;
}

.clock {
    width: 70px;
    display: flex;
    flex-direction: column;
    align-items: center;
    font-family: "Noto Sans", "Noto Sans CJK TC", sans-serif;
    font-size: 12px;
    line-height: 17px;
}

.notify {
    width: 44px;
    height: 40px;
}

.show-desktop {
    width: 4px;
    height: 40px;
    margin-left: 6px;
    border-left: 1px solid #444;
}
```
